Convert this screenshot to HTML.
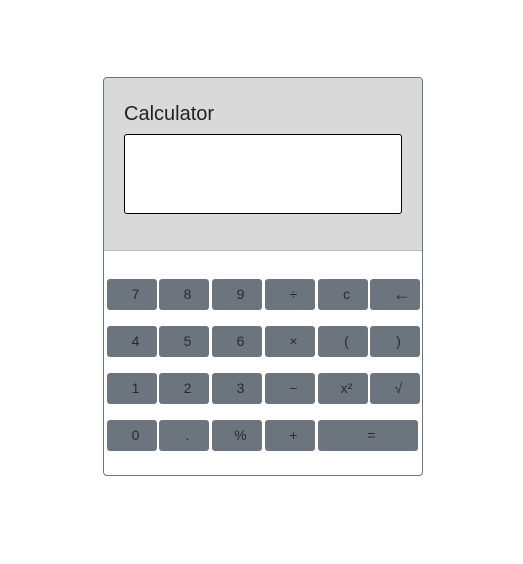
<!DOCTYPE html>
<html><head><style>
body{margin:0;background:#fff;font-family:"Liberation Sans",Arial,sans-serif;}
.card{position:absolute;left:103px;top:77px;width:318px;height:397px;border:1px solid #6c757d;border-radius:4px;overflow:hidden;}
.hd{position:absolute;left:0;top:0;width:318px;height:172px;background:#d9d9d9;border-bottom:1px solid #bbb;}
.t{position:absolute;left:20px;top:25px;font-size:20px;color:#222;}
.d{position:absolute;left:20px;top:56px;width:276px;height:78px;background:#fff;border:1px solid #000;border-radius:3px;}
.b{position:absolute;box-sizing:border-box;padding-left:7px;height:31px;background:#6c757d;border-radius:3px;color:#2a2a2a;font-size:14px;line-height:31px;text-align:center;}
</style></head><body>
<div class="card"><div class="hd"><div class="t">Calculator</div><div class="d"></div></div></div>
<div id="g"></div>
<script>
var xs=[107,159,212,265,318,370],ys=[279,326,373,420];
var L=[["7","8","9","÷","c","←"],["4","5","6","×","(",")"],["1","2","3","−","x²","√"],["0",".","%","+","="]];
var h="";
L.forEach(function(r,i){r.forEach(function(t,j){var w=(t=="=")?100:50;var s=(t=="←")?'font-size:18px;padding-left:14px;':'';h+='<div class="b" style="'+s+'left:'+xs[j]+'px;top:'+ys[i]+'px;width:'+w+'px">'+t+'</div>';});});
document.getElementById("g").innerHTML=h;
</script>
</body></html>
